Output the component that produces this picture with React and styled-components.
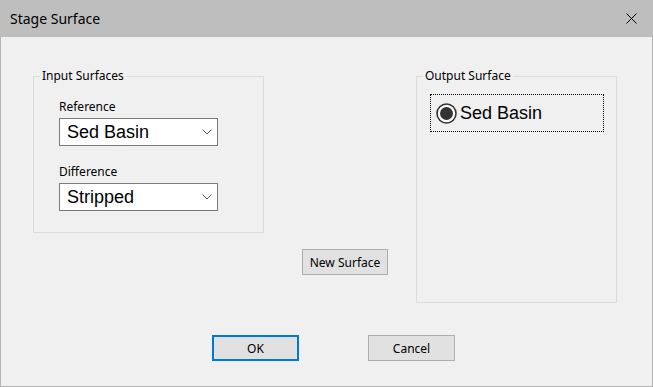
import React from "react";
import styled, { createGlobalStyle } from "styled-components";

const GlobalStyle = createGlobalStyle`
  html, body {
    margin: 0;
    padding: 0;
    background: #f0f0f0;
  }
  * {
    box-sizing: border-box;
  }
`;

const Frame = styled.div`
  width: 653px;
  height: 387px;
  display: flex;
  flex-direction: column;
  background: #f0f0f0;
  border: 1px solid #b4b4b4;
  border-top: none;
  font-family: "Noto Sans", "Open Sans", sans-serif;
  color: #000;
`;

const TitleBar = styled.div`
  height: 37px;
  margin: 0 -1px;
  background: #bebebe;
  display: flex;
  align-items: center;
  justify-content: space-between;
  padding: 0 16px 0 10px;
  font-size: 14px;
`;

const CloseIcon = () => (
  <svg width="11" height="11" viewBox="0 0 11 11">
    <path d="M0.5 0.5 L10.5 10.5 M10.5 0.5 L0.5 10.5" stroke="#000" strokeWidth="1" />
  </svg>
);

const Body = styled.div`
  display: flex;
  flex-direction: column;
  padding: 39px 0 0 32px;
`;

const TopRow = styled.div`
  display: flex;
  align-items: flex-start;
`;

const GroupBox = styled.div`
  position: relative;
  width: ${(p) => p.$w}px;
  height: ${(p) => p.$h}px;
  border: 1px solid #dcdcdc;
  padding: ${(p) => p.$pad};
  display: flex;
  flex-direction: column;
`;

const Legend = styled.span`
  position: absolute;
  top: -9px;
  left: 6px;
  padding: 0 2px;
  background: #f0f0f0;
  font-size: 12px;
  line-height: 16px;
`;

const FieldLabel = styled.div`
  font-size: 12px;
  line-height: 16px;
  margin-top: ${(p) => p.$top || 0}px;
`;

const Select = styled.div`
  margin-top: 3px;
  width: 159px;
  height: 28px;
  background: #fff;
  border: 1px solid #7a7a7a;
  display: flex;
  align-items: center;
  justify-content: space-between;
  padding: 0 5px 0 7px;
  font-family: "Liberation Sans", Arial, sans-serif;
  font-size: 18px;
`;

const Chevron = () => (
  <svg width="10" height="6" viewBox="0 0 10 6">
    <path d="M0.5 0.5 L5 5 L9.5 0.5" fill="none" stroke="#555" strokeWidth="1" />
  </svg>
);

const Button = styled.button`
  width: ${(p) => p.$w}px;
  height: 26px;
  padding: 0;
  background: #e1e1e1;
  border: ${(p) => (p.$primary ? "2px solid #0078d7" : "1px solid #adadad")};
  font-family: "Noto Sans", "Open Sans", sans-serif;
  font-size: 12px;
  color: #000;
`;

const MiddleButton = styled(Button)`
  margin: 173px 28px 0 38px;
`;

const RadioItem = styled.div`
  width: 174px;
  height: 38px;
  border: 1px dotted #000;
  display: flex;
  align-items: center;
  gap: 3px;
  padding-left: 5px;
  font-family: "Liberation Sans", Arial, sans-serif;
  font-size: 18px;
`;

const RadioDot = () => (
  <svg width="21" height="21" viewBox="0 0 21 21">
    <circle cx="10.5" cy="10.5" r="9.5" fill="#fff" stroke="#333" strokeWidth="1.6" />
    <circle cx="10.5" cy="10.5" r="6.5" fill="#333" />
  </svg>
);

const ButtonRow = styled.div`
  display: flex;
  gap: 69px;
  margin-top: 32px;
  padding-left: 179px;
`;

export default function App() {
  return (
    <>
      <GlobalStyle />
      <Frame>
        <TitleBar>
          <span>Stage Surface</span>
          <CloseIcon />
        </TitleBar>
        <Body>
          <TopRow>
            <GroupBox $w={231} $h={157} $pad="22px 0 0 25px">
              <Legend>Input Surfaces</Legend>
              <FieldLabel>Reference</FieldLabel>
              <Select>
                <span>Sed Basin</span>
                <Chevron />
              </Select>
              <FieldLabel $top={18}>Difference</FieldLabel>
              <Select>
                <span>Stripped</span>
                <Chevron />
              </Select>
            </GroupBox>
            <MiddleButton $w={86}>New Surface</MiddleButton>
            <GroupBox $w={201} $h={227} $pad="17px 0 0 13px">
              <Legend>Output Surface</Legend>
              <RadioItem>
                <RadioDot />
                <span>Sed Basin</span>
              </RadioItem>
            </GroupBox>
          </TopRow>
          <ButtonRow>
            <Button $w={87} $primary>OK</Button>
            <Button $w={87}>Cancel</Button>
          </ButtonRow>
        </Body>
      </Frame>
    </>
  );
}
